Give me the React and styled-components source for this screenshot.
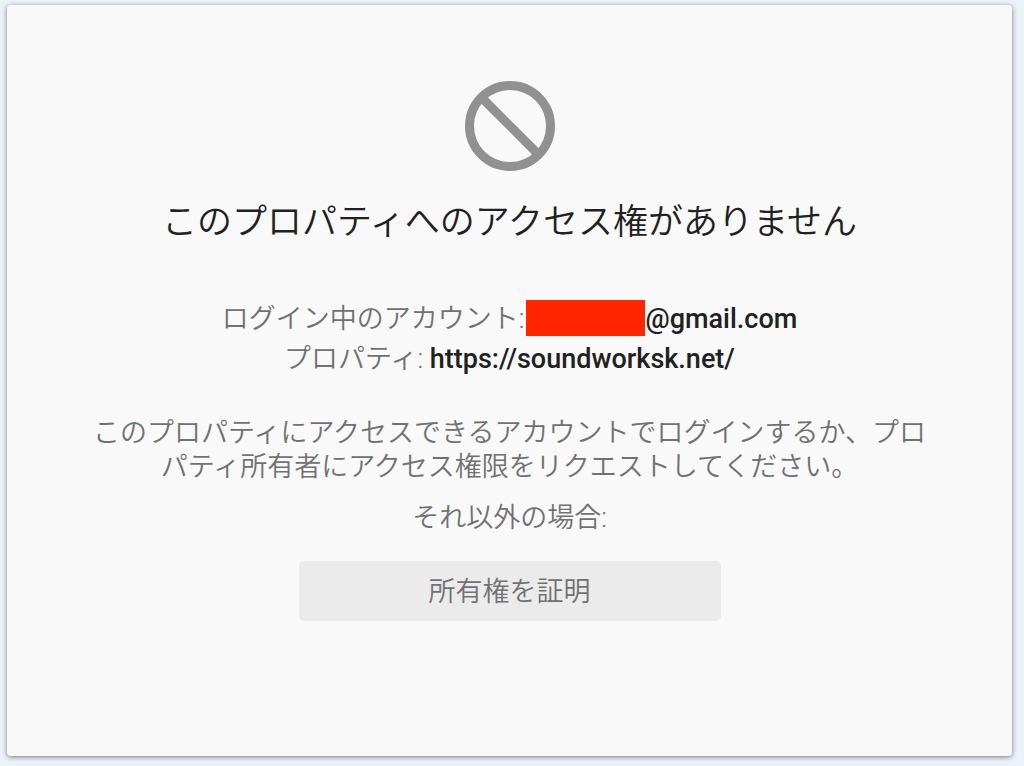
import styled, { createGlobalStyle } from "styled-components";

export default function App() {
  return (
    <>
      <GlobalStyle />
      <StyledCard>
        <BlockIcon />
        <StyledTitle>このプロパティへのアクセス権がありません</StyledTitle>
        <StyledDetails>
          <StyledDetail>
            ログイン中のアカウント:
            <StyledMask />
            <StyledValue>@gmail.com</StyledValue>
          </StyledDetail>
          <StyledDetail>
            プロパティ: <StyledValue>https://soundworksk.net/</StyledValue>
          </StyledDetail>
        </StyledDetails>
        <StyledText>
          このプロパティにアクセスできるアカウントでログインするか、プロパティ所有者にアクセス権限をリクエストしてください。
        </StyledText>
        <StyledText>それ以外の場合:</StyledText>
        <StyledButton type="button">所有権を証明</StyledButton>
      </StyledCard>
    </>
  );
}

function BlockIcon() {
  return (
    <StyledIcon viewBox="0 0 90 90" aria-hidden="true">
      <circle cx="45" cy="45" r="40.5" />
      <path d="M16.5 16.5l57 57" />
    </StyledIcon>
  );
}

const GlobalStyle = createGlobalStyle`
  * {
    box-sizing: border-box;
  }

  body {
    margin: 0;
    background-color: #edf2fa;
    font-family: Roboto, "Noto Sans CJK JP", sans-serif;
  }

  #root {
    display: flex;
    min-height: 100vh;
    padding: 5px 12px 10px 7px;
  }
`;

const StyledCard = styled.main`
  flex: 1;
  display: flex;
  flex-direction: column;
  align-items: center;
  padding: 76px 80px 40px;
  border-radius: 4px;
  background-color: #f9f9f9;
  color: #717171;
  box-shadow: 0 1px 5px rgba(0, 0, 0, 0.5);
`;

const StyledIcon = styled.svg`
  width: 90px;
  height: 90px;
  fill: none;
  stroke: #919191;
  stroke-width: 9;
`;

const StyledTitle = styled.h1`
  margin: 26px 0 0;
  color: #212121;
  font-size: 35px;
  font-weight: 350;
  line-height: 52px;
`;

const StyledDetails = styled.div`
  margin: 50px 0 37px;
  text-align: center;
`;

const StyledDetail = styled.p`
  margin: 0;
  font-size: 27px;
  font-weight: 350;
  line-height: 40px;
`;

const StyledMask = styled.span`
  display: inline-block;
  width: 119px;
  height: 36px;
  margin-left: 2px;
  background-color: #ff2600;
  vertical-align: -8px;
`;

const StyledValue = styled.strong`
  color: #212121;
  font-weight: 500;
`;

const StyledText = styled.p`
  max-width: 840px;
  margin: 0 0 17px;
  font-size: 27px;
  font-weight: 350;
  line-height: 34px;
  text-align: center;
`;

const StyledButton = styled.button`
  width: 422px;
  max-width: 100%;
  height: 60px;
  margin-top: 9px;
  padding: 0 12px 3px;
  border: none;
  border-radius: 5px;
  background-color: #ebebeb;
  color: #717171;
  font-family: inherit;
  font-size: 27px;
  font-weight: 350;

  &:hover {
    cursor: pointer;
    background-color: #e0e0e0;
  }
`;
